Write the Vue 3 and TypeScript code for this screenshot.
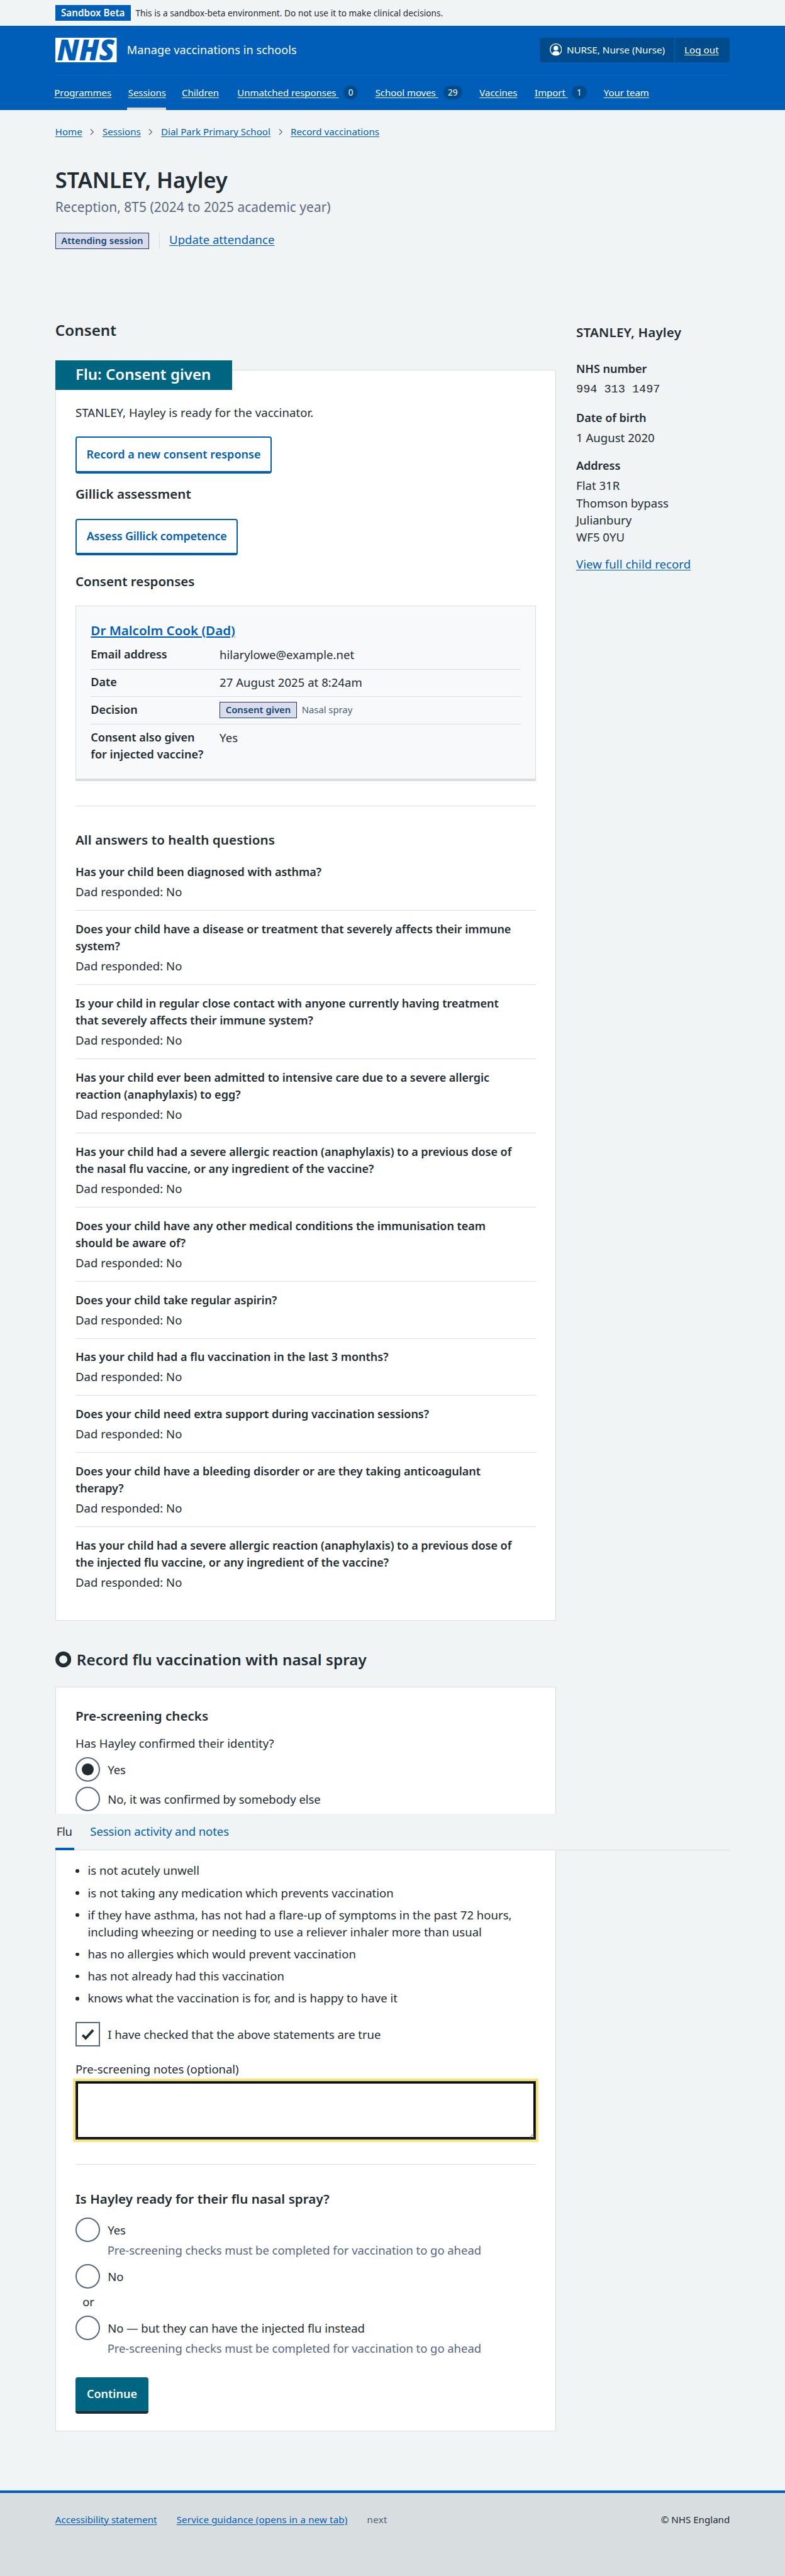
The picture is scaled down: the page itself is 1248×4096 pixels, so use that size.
<script setup lang="ts">
interface NavItem { label: string; count?: number; current?: boolean }
interface Option { label: string; hint?: string; checked?: boolean }

const navItems: NavItem[] = [
  { label: 'Programmes' },
  { label: 'Sessions', current: true },
  { label: 'Children' },
  { label: 'Unmatched responses', count: 0 },
  { label: 'School moves', count: 29 },
  { label: 'Vaccines' },
  { label: 'Import', count: 1 },
  { label: 'Your team' },
]

const breadcrumbs: string[] = ['Home', 'Sessions', 'Dial Park Primary School', 'Record vaccinations']

const questions: string[][] = [
  ['Has your child been diagnosed with asthma?'],
  ['Does your child have a disease or treatment that severely affects their immune', 'system?'],
  ['Is your child in regular close contact with anyone currently having treatment', 'that severely affects their immune system?'],
  ['Has your child ever been admitted to intensive care due to a severe allergic', 'reaction (anaphylaxis) to egg?'],
  ['Has your child had a severe allergic reaction (anaphylaxis) to a previous dose of', 'the nasal flu vaccine, or any ingredient of the vaccine?'],
  ['Does your child have any other medical conditions the immunisation team', 'should be aware of?'],
  ['Does your child take regular aspirin?'],
  ['Has your child had a flu vaccination in the last 3 months?'],
  ['Does your child need extra support during vaccination sessions?'],
  ['Does your child have a bleeding disorder or are they taking anticoagulant', 'therapy?'],
  ['Has your child had a severe allergic reaction (anaphylaxis) to a previous dose of', 'the injected flu vaccine, or any ingredient of the vaccine?'],
]

const identityOptions: Option[] = [
  { label: 'Yes', checked: true },
  { label: 'No, it was confirmed by somebody else' },
]

const statements: string[][] = [
  ['is not acutely unwell'],
  ['is not taking any medication which prevents vaccination'],
  ['if they have asthma, has not had a flare-up of symptoms in the past 72 hours,', 'including wheezing or needing to use a reliever inhaler more than usual'],
  ['has no allergies which would prevent vaccination'],
  ['has not already had this vaccination'],
  ['knows what the vaccination is for, and is happy to have it'],
]

const hint = 'Pre-screening checks must be completed for vaccination to go ahead'
const address: string[] = ['Flat 31R', 'Thomson bypass', 'Julianbury', 'WF5 0YU']
</script>

<template>
  <div class="page">
    <div class="env">
      <strong class="env-tag">Sandbox Beta</strong>
      <span class="env-text">This is a sandbox-beta environment. Do not use it to make clinical decisions.</span>
    </div>

    <header class="header">
      <div class="header-top">
        <svg class="logo" viewBox="0 0 100 40" width="100" height="40" role="img" aria-label="NHS">
          <rect width="100" height="40" fill="#fff" />
          <text x="2.5" y="36.4" textLength="94" lengthAdjust="spacingAndGlyphs" class="logo-text">NHS</text>
        </svg>
        <span class="service">Manage vaccinations in schools</span>
        <div class="account">
          <span class="user">
            <svg width="20" height="20" viewBox="0 0 20 20" aria-hidden="true">
              <defs><clipPath id="userClip"><circle cx="10" cy="10" r="9.3" /></clipPath></defs>
              <circle cx="10" cy="10" r="9.3" fill="none" stroke="#fff" stroke-width="1.4" />
              <circle cx="10" cy="7.7" r="3.9" fill="#fff" />
              <path d="M4.3 20v-3.2c0-2.6 1.9-4.3 4.2-4.3h3c2.3 0 4.2 1.7 4.2 4.3V20z" fill="#fff" clip-path="url(#userClip)" />
            </svg>
            NURSE, Nurse (Nurse)
          </span>
          <span class="logout"><a>Log out</a></span>
        </div>
      </div>
      <nav class="nav">
        <div v-for="item in navItems" :key="item.label" class="nav-item" :class="{ current: item.current }">
          <a>{{ item.label }}<template v-if="item.count !== undefined">&nbsp;</template></a>
          <span v-if="item.count !== undefined" class="count">{{ item.count }}</span>
        </div>
      </nav>
    </header>

    <main class="main">
      <nav class="crumbs">
        <template v-for="(crumb, i) in breadcrumbs" :key="crumb">
          <svg v-if="i > 0" width="7" height="12" viewBox="0 0 7 12" aria-hidden="true">
            <path d="M1 1.5 5.5 6 1 10.5" fill="none" stroke="#55677f" stroke-width="1.3" />
          </svg>
          <a>{{ crumb }}</a>
        </template>
      </nav>

      <h1>STANLEY, Hayley</h1>
      <p class="caption">Reception, 8T5 (2024 to 2025 academic year)</p>
      <div class="attendance">
        <strong class="tag">Attending session</strong>
        <span class="update"><a>Update attendance</a></span>
      </div>

      <div class="columns">
        <div class="primary">
          <h2 class="consent-title">Consent</h2>

          <section class="card consent-card">
            <div class="banner">Flu: Consent given</div>
            <p class="ready">STANLEY, Hayley is ready for the vaccinator.</p>
            <button class="btn outline b1">Record a new consent response</button>
            <h3 class="gillick">Gillick assessment</h3>
            <button class="btn outline b2">Assess Gillick competence</button>
            <h3 class="responses">Consent responses</h3>

            <div class="response">
              <h4><a>Dr Malcolm Cook (Dad)</a></h4>
              <dl>
                <div class="row"><dt>Email address</dt><dd>hilarylowe@example.net</dd></div>
                <div class="row"><dt>Date</dt><dd>27 August 2025 at 8:24am</dd></div>
                <div class="row">
                  <dt>Decision</dt>
                  <dd class="decision"><strong class="tag">Consent given</strong><span>Nasal spray</span></dd>
                </div>
                <div class="row"><dt>Consent also given<br>for injected vaccine?</dt><dd>Yes</dd></div>
              </dl>
            </div>

            <hr class="hr1">
            <h3 class="answers-title">All answers to health questions</h3>
            <dl class="answers">
              <div v-for="q in questions" :key="q.join(' ')" class="answer">
                <dt><span v-for="line in q" :key="line" class="line">{{ line }}</span></dt>
                <dd>Dad responded: No</dd>
              </div>
            </dl>
          </section>

          <h2 class="record-title">
            <svg width="26" height="26" viewBox="0 0 26 26" aria-hidden="true">
              <circle cx="13" cy="13" r="9.8" fill="none" stroke="#212b32" stroke-width="6.2" />
            </svg>
            Record flu vaccination with nasal spray
          </h2>

          <section class="card form-card">
            <nav class="tabs">
              <span class="tab active">Flu</span>
              <a class="tab">Session activity and notes</a>
            </nav>

            <h3>Pre-screening checks</h3>
            <p class="identity">Has Hayley confirmed their identity?</p>
            <div class="identity-options">
              <label v-for="o in identityOptions" :key="o.label" class="option">
                <span class="radio" :class="{ on: o.checked }"></span>{{ o.label }}
              </label>
            </div>

            <ul>
              <li v-for="s in statements" :key="s[0]"><span v-for="line in s" :key="line" class="line">{{ line }}</span></li>
            </ul>

            <label class="option check-option">
              <span class="checkbox">
                <svg width="36" height="36" viewBox="0 0 36 36" aria-hidden="true">
                  <path d="M9.6 19.2 14.6 24.6 26.8 11.2" fill="none" stroke="#212b32" stroke-width="4" />
                </svg>
              </span>I have checked that the above statements are true
            </label>

            <label class="notes-label" for="notes">Pre-screening notes (optional)</label>
            <textarea id="notes"></textarea>
            <hr class="hr2">

            <h3 class="ready-title">Is Hayley ready for their flu nasal spray?</h3>
            <label class="option first"><span class="radio"></span>Yes</label>
            <p class="hint">{{ hint }}</p>
            <label class="option second"><span class="radio"></span>No</label>
            <p class="or">or</p>
            <label class="option third"><span class="radio"></span>No — but they can have the injected flu instead</label>
            <p class="hint">{{ hint }}</p>
            <button class="btn solid">Continue</button>
          </section>
        </div>

        <aside class="side">
          <h3>STANLEY, Hayley</h3>
          <dl>
            <dt>NHS number</dt>
            <dd class="mono">994 313 1497</dd>
            <dt>Date of birth</dt>
            <dd>1 August 2020</dd>
            <dt>Address</dt>
            <dd><span v-for="line in address" :key="line" class="line">{{ line }}</span></dd>
          </dl>
          <a>View full child record</a>
        </aside>
      </div>
    </main>

    <footer class="footer">
      <div class="footer-inner">
        <a>Accessibility statement</a>
        <a>Service guidance (opens in a new tab)</a>
        <span class="next">next</span>
        <span class="copy">© NHS England</span>
      </div>
    </footer>
  </div>
</template>

<style>
body { background: #f0f4f5; overflow: hidden; }
</style>

<style scoped>
.page {
  zoom: 0.975;
  width: 1280px;
  height: 4201px;
  display: flex;
  flex-direction: column;
  background: #f0f4f5;
  color: #212b32;
  font: 400 19px/28px "Noto Sans", "Open Sans", sans-serif;
  letter-spacing: 0.03px;
  white-space: nowrap;
  overflow: hidden;
}
.page * { box-sizing: border-box; }
h1, h2, h3, h4, p, dl, dd, dt, ul { margin: 0; padding: 0; font-weight: 600; }
p, dd, ul { font-weight: 400; }
a { color: #005eb8; text-decoration: underline; text-decoration-thickness: 1px; text-underline-offset: 2.4px; }
.line { display: block; }

.env { height: 42px; padding: 8px 90px 0; display: flex; gap: 8px; flex: none; }
.env-tag { width: 123px; height: 26px; background: #005eb8; color: #fff; font-size: 15.6px; font-weight: 600; line-height: 26px; text-align: center; letter-spacing: 0; }
.env-text { font-size: 14px; line-height: 27px; letter-spacing: 0.04px; }

.header { height: 137px; background: #005eb8; padding: 20px 90px 0; flex: none; color: #fff; }
.header a { color: #fff; }
.header-top { height: 61px; display: flex; align-items: flex-start; border-bottom: 1px solid #0b66c3; }
.logo { display: block; flex: none; overflow: visible; }
.logo-text { font: italic 800 47px "Open Sans", "Noto Sans", sans-serif; fill: #005eb8; letter-spacing: 0; }
.service { margin-left: 17px; line-height: 39px; font-size: 18.6px; letter-spacing: 0.06px; }
.account { margin-left: auto; display: flex; width: 310px; height: 40px; background: #004b8c; border-radius: 4px; overflow: hidden; font-size: 15.6px; line-height: 40px; letter-spacing: 0; }
.user { display: flex; gap: 8px; width: 220px; padding-left: 16px; border-right: 1px solid #005eb8; }
.user svg { margin-top: 9px; }
.logout { padding-left: 16px; }
.nav { display: grid; grid-template-columns: 96.5px 63.5px 66.5px 201px 146px 66px 88.5px 82px; gap: 24px; margin-left: -3.5px; height: 56px; font-size: 15.4px; letter-spacing: -0.05px; }
.nav-item { display: flex; justify-content: space-between; padding: 0 2px; line-height: 56px; height: 56px; }
.nav-item.current { border-bottom: 4.12px solid #d8dde0; }
.count { margin: 17px 0 0; height: 22px; min-width: 24px; padding: 0 7.8px; border-radius: 11px; background: #004b8c; font-size: 13.9px; line-height: 23px; text-align: center; }

.main { padding: 24px 90px 0; flex: none; }
.crumbs { display: flex; align-items: center; gap: 13px; font-size: 15.5px; line-height: 24px; height: 24px; letter-spacing: 0; }
h1 { margin-top: 45px; font-size: 35.2px; line-height: 44px; letter-spacing: 0; }
.caption { margin-top: 6.4px; color: #5a6a7f; font-size: 21.5px; line-height: 32px; letter-spacing: 0.02px; }
.attendance { margin-top: 25.6px; display: flex; height: 26px; gap: 16px; }
.tag { width: 153px; height: 26px; border: 1px solid #1d3a70; background: #dadde9; color: #12467a; font-size: 15.3px; font-weight: 600; line-height: 24.5px; letter-spacing: 0; text-align: center; }
.update { border-left: 1px solid #d8dde0; padding-left: 16px; line-height: 23px; }

.columns { margin-top: 94px; display: flex; justify-content: space-between; }
.primary { width: 817px; }
.consent-title { padding-top: 22.4px; }
h2 { font-size: 24.8px; line-height: 32px; letter-spacing: 0.06px; }
h3, h4 { font-size: 21.1px; line-height: 28px; letter-spacing: 0; }
.card { background: #fff; border: 1px solid #d8dde0; padding: 0 32px; display: flex; flex-direction: column; align-items: flex-start; }
.consent-card { margin-top: 48.6px; padding-bottom: 47.4px; }
.banner { margin: -16px 0 0 -33px; width: 288px; height: 48px; padding-left: 33px; background: #006580; color: #fff; font-size: 24.7px; font-weight: 600; line-height: 46px; letter-spacing: 0; }
.ready { margin-top: 22.6px; letter-spacing: 0.1px; }
.btn { display: block; height: 60px; font: 600 18.5px/51px "Noto Sans", "Open Sans", sans-serif; letter-spacing: 0; border-radius: 4px; padding: 0; text-align: center; }
.outline { background: #fff; color: #005eb8; border: 2.06px solid #005eb8; border-bottom-width: 4.12px; }
.b1 { margin-top: 25.4px; width: 320px; }
.gillick { margin-top: 20.3px; }
.b2 { margin-top: 25.7px; width: 265px; letter-spacing: -0.25px; }
.responses { margin-top: 28.7px; }

.response { margin-top: 25.3px; width: 751px; height: 286px; border: 1px solid #d8dde0; border-bottom: 4.12px solid #d8dde0; background: #f8f9fb; padding: 25px 24px 0; }
h4 a { text-decoration-thickness: 2px; }
.response dl { margin-top: 5px; }
.row { display: flex; padding: 6.6px 0 9.4px; border-bottom: 1px solid #d8dde0; }
.row:last-child { border-bottom: 0; }
dt { font-size: 18.5px; letter-spacing: -0.02px; }
.row dt { width: 210px; }
.decision { display: flex; height: 28px; gap: 8px; }
.decision .tag { margin-top: 1.4px; width: 126px; }
.decision span { font-size: 15.3px; line-height: 28px; color: #4c6272; letter-spacing: -0.05px; padding-top: 0.6px; }
hr { border: 0; height: 1px; width: 751px; background: #d8dde0; margin: 0; flex: none; }
.hr1 { margin-top: 40px; }
.answers-title { margin-top: 41px; letter-spacing: 0.1px; }
.answers { margin-top: 8.4px; width: 751px; }
.answer { padding: 16px 0; border-bottom: 1px solid #d8dde0; }
.answer:last-child { border: 0; padding-bottom: 0.2px; }
.answer dd { margin-top: 4px; }

.record-title { margin-top: 47.4px; display: flex; gap: 9px; }
.record-title svg { margin-top: 3.6px; }
.form-card { position: relative; margin-top: 28.6px; padding: 33px 32px 27.6px; }
.tabs { position: absolute; left: -1px; top: 206px; width: 1100px; height: 60px; display: flex; gap: 24px; background: #f0f4f5; border-bottom: 1px solid #d8dde0; }
.tab { height: 60px; line-height: 58px; padding: 0 2px; text-decoration: none; letter-spacing: -0.1px; }
.active { width: 31px; border-bottom: 4.12px solid #005eb8; letter-spacing: -0.3px; }
.identity { margin-top: 15.6px; }
.identity-options { margin-top: 9.4px; display: flex; flex-direction: column; gap: 8px; letter-spacing: -0.06px; }
.option { display: flex; height: 40px; line-height: 41px; gap: 12.5px; letter-spacing: -0.04px; }
.radio { width: 40px; height: 40px; border: 2.06px solid #55677f; border-radius: 50%; background: #fff; flex: none; display: flex; align-items: center; justify-content: center; }
.radio.on::after { content: ""; width: 20px; height: 20px; border-radius: 50%; background: #212b32; }
ul { list-style: none; margin-top: 82.6px; display: flex; flex-direction: column; gap: 8px; }
li { position: relative; padding-left: 20px; }
li::before { content: ""; position: absolute; left: 0.3px; top: 11.8px; width: 6px; height: 6px; border-radius: 50%; background: #212b32; }
.check-option { margin-top: 24.9px; }
.checkbox { width: 40px; height: 40px; border: 2.06px solid #55677f; background: #fff; flex: none; }
.checkbox svg { display: block; }
.notes-label { margin-top: 23.1px; letter-spacing: -0.05px; }
textarea { display: block; margin: 5.4px 0 0; width: 751px; height: 96px; padding: 4px; border: 2.06px solid #212b32; border-radius: 0; background: #fff; box-shadow: inset 0 0 0 2.06px #000, 0 0 0 4.1px #fae582; outline: 0; resize: vertical; }
.hr2 { margin-top: 40px; }
.ready-title { margin-top: 42px; letter-spacing: 0.06px; }
.first { margin-top: 16px; }
.hint { margin: -1.4px 0 0 52px; color: #55677f; letter-spacing: -0.06px; }
.second { margin-top: 9.4px; }
.or { margin: 7.1px 0 0 11.5px; }
.third { margin-top: 8.9px; }
.solid { margin-top: 33.4px; width: 119px; border: 0; border-bottom: 4.12px solid #212b32; background: #006580; color: #fff; line-height: 53px; }

.side { width: 250.5px; padding-top: 28px; }
.side h3 { letter-spacing: 0.2px; }
.side dt { margin-top: 20px; }
.side h3 + dl dt:first-child { margin-top: 32.2px; }
.side dd { margin-top: 4px; }
.side .mono { font-family: "Liberation Mono", monospace; letter-spacing: 0; padding-top: 1px; }
.side dd + dt { margin-top: 18.4px; }
.side a { display: inline-block; margin-top: 16px; letter-spacing: 0.1px; }

.footer { margin-top: 96px; flex: 1; background: #d8dde0; border-top: 4.12px solid #005eb8; padding: 31.6px 90px 0; }
.footer-inner { display: flex; gap: 32px; font-size: 15.5px; line-height: 24px; letter-spacing: 0; }
.footer-inner a + a { letter-spacing: 0.15px; }
.next { color: #4c6272; letter-spacing: 0.3px; }
.copy { margin-left: auto; }
</style>
